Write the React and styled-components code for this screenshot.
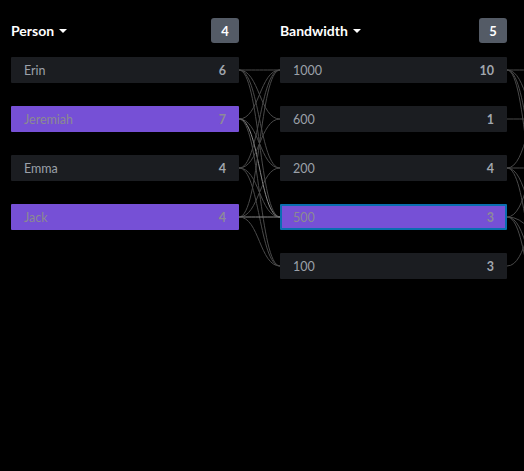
import React from "react";
import styled, { createGlobalStyle } from "styled-components";

const Global = createGlobalStyle`
  html, body { margin: 0; padding: 0; background: #000; }
  body { font-family: Lato, "Open Sans", sans-serif; width: 524px; height: 471px; overflow: hidden; }
`;

const Page = styled.div`
  position: relative;
  width: 524px;
  height: 471px;
  box-sizing: border-box;
  padding: 18px 0 0 11px;
  display: flex;
  gap: 41px;
  overflow: hidden;
`;

const Column = styled.div`
  width: ${(p) => p.$w}px;
  flex: none;
  display: flex;
  flex-direction: column;
  position: relative;
  z-index: 1;
`;

const Header = styled.div`
  height: 25px;
  display: flex;
  align-items: center;
  justify-content: space-between;
  margin-bottom: 14px;
`;

const Title = styled.div`
  color: #fff;
  font-weight: 700;
  font-size: 14px;
  display: flex;
  align-items: center;
  gap: 5px;
`;

const Caret = styled.span`
  width: 0;
  height: 0;
  border-left: 4px solid transparent;
  border-right: 4px solid transparent;
  border-top: 4px solid #fff;
  margin-top: 1px;
`;

const Badge = styled.div`
  width: 28px;
  height: 25px;
  border-radius: 3px;
  background: #545b66;
  color: #fff;
  font-weight: 700;
  font-size: 13px;
  display: flex;
  align-items: center;
  justify-content: center;
`;

const Rows = styled.div`
  display: flex;
  flex-direction: column;
  gap: 23px;
`;

const Row = styled.div`
  height: 26px;
  box-sizing: border-box;
  display: flex;
  align-items: center;
  justify-content: space-between;
  padding: 0 13px 0 13px;
  background: ${(p) => (p.$sel ? "#7650d6" : "#1b1d21")};
  border: ${(p) => (p.$focus ? "2px solid #0b6eb0" : "none")};
  padding-left: ${(p) => (p.$focus ? 11 : 13)}px;
  padding-right: ${(p) => (p.$focus ? 11 : 13)}px;
  border-radius: 1px;
  font-size: 12.5px;
`;

const Label = styled.span`
  color: ${(p) => (p.$sel ? "#8b8a92" : "#9ba1a9")};
`;

const Count = styled.span`
  font-weight: 700;
  color: ${(p) => (p.$sel ? "#8d8a98" : "#a2a7ae")};
`;

const Links = styled.svg`
  position: absolute;
  left: 0;
  top: 0;
  pointer-events: none;
  z-index: 0;
`;

const people = [
  { name: "Erin", count: 6 },
  { name: "Jeremiah", count: 7, sel: true },
  { name: "Emma", count: 4 },
  { name: "Jack", count: 4, sel: true },
];

const bandwidth = [
  { name: "1000", count: 10 },
  { name: "600", count: 1 },
  { name: "200", count: 4 },
  { name: "500", count: 3, sel: true, focus: true },
  { name: "100", count: 3 },
];

const rowY = (i) => 70 + i * 49;

const leftLinks = [
  [0, 0], [0, 1], [0, 2], [0, 3],
  [1, 0], [1, 2], [1, 3, true], [1, 4],
  [2, 0], [2, 1], [2, 3], [2, 4],
  [3, 0], [3, 2], [3, 3, true], [3, 4],
];

const rightLinks = [
  [0, 0], [0, 1.2], [0, 2.4], [0, 3.5],
  [1, 1],
  [2, 2], [2, 0.6], [2, 3.3], [2, 4.6],
  [3, 3.4], [3, 4.3], [3, 5.2], [3, 1.7],
  [4, 2.8],
];

function curve(x1, y1, x2, y2) {
  const m = (x1 + x2) / 2;
  return `M${x1} ${y1} C${m} ${y1} ${m} ${y2} ${x2} ${y2}`;
}

export default function App() {
  return (
    <>
      <Global />
      <Page>
        <Links width="524" height="471" viewBox="0 0 524 471">
          {leftLinks.map(([a, b, hi], k) => (
            <path
              key={"l" + k}
              d={curve(239, rowY(a), 280, rowY(b))}
              fill="none"
              stroke={hi ? "#8a8a8a" : "#4a4a4a"}
              strokeWidth="1"
            />
          ))}
          {rightLinks.map(([a, b], k) => (
            <path
              key={"r" + k}
              d={curve(507, rowY(a), 548, rowY(b))}
              fill="none"
              stroke="#4a4a4a"
              strokeWidth="1"
            />
          ))}
        </Links>
        <Column $w={228}>
          <Header>
            <Title>
              Person <Caret />
            </Title>
            <Badge>4</Badge>
          </Header>
          <Rows>
            {people.map((p) => (
              <Row key={p.name} $sel={p.sel}>
                <Label $sel={p.sel}>{p.name}</Label>
                <Count $sel={p.sel}>{p.count}</Count>
              </Row>
            ))}
          </Rows>
        </Column>
        <Column $w={227}>
          <Header>
            <Title>
              Bandwidth <Caret />
            </Title>
            <Badge>5</Badge>
          </Header>
          <Rows>
            {bandwidth.map((p) => (
              <Row key={p.name} $sel={p.sel} $focus={p.focus}>
                <Label $sel={p.sel}>{p.name}</Label>
                <Count $sel={p.sel}>{p.count}</Count>
              </Row>
            ))}
          </Rows>
        </Column>
      </Page>
    </>
  );
}
